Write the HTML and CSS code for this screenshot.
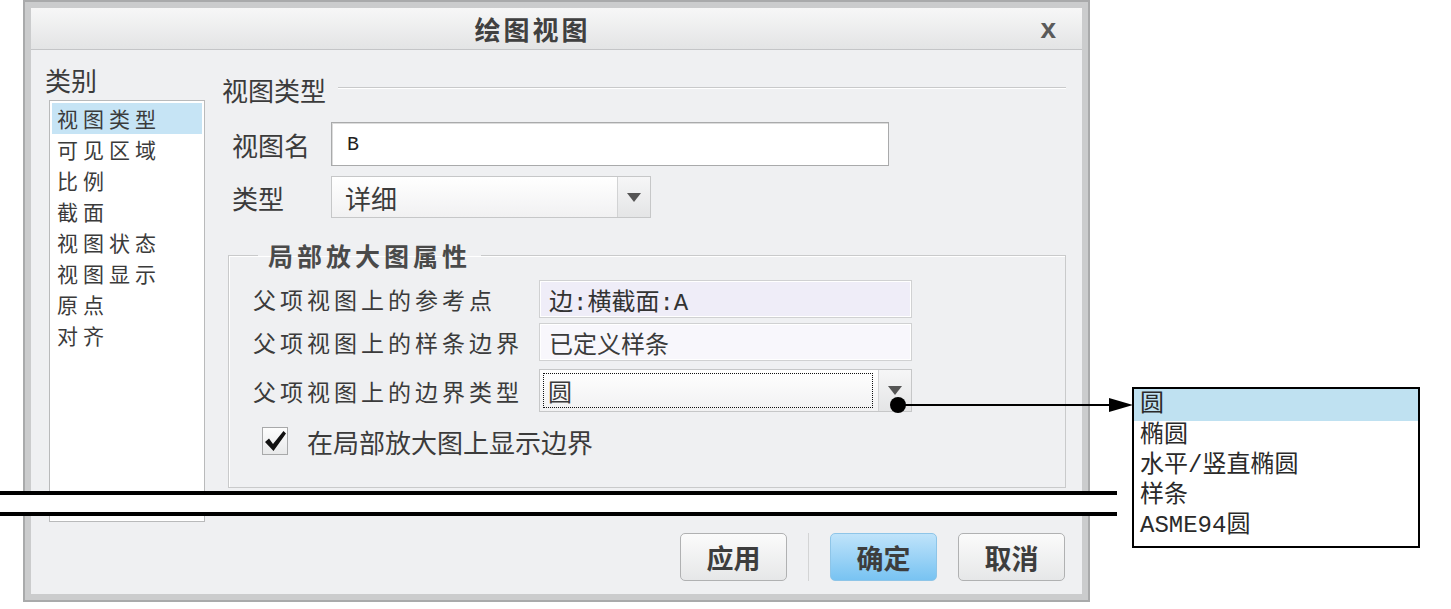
FILE: index.html
```html
<!DOCTYPE html>
<html lang="zh-CN">

<head>
    <meta charset="UTF-8">
    <meta name="viewport" content="width=device-width, initial-scale=1.0">
    <title>绘图视图</title>
    <link rel="stylesheet" href="styles.css">
</head>

<body>
    <div class="page">
        <div class="dialog">
            <div class="titlebar">
                <span class="title">绘图视图</span>
                <span class="close">x</span>
            </div>
            <div class="main">
                <!-- 左侧类别 -->
                <div class="category">
                    <div class="cat-label">类别</div>
                    <ul class="cat-list">
                        <li class="active">视图类型</li>
                        <li>可见区域</li>
                        <li>比例</li>
                        <li>截面</li>
                        <li>视图状态</li>
                        <li>视图显示</li>
                        <li>原点</li>
                        <li>对齐</li>
                    </ul>
                </div>
                <!-- 右侧面板 -->
                <div class="panel">
                    <div class="section-head"><span>视图类型</span><i class="rule"></i></div>
                    <div class="form-row row-name">
                        <span class="form-label">视图名</span>
                        <div class="input">B</div>
                    </div>
                    <div class="form-row row-type">
                        <span class="form-label">类型</span>
                        <div class="combo combo-type">
                            <span class="combo-text">详细</span>
                            <span class="combo-btn"><i class="tri"></i></span>
                        </div>
                    </div>
                    <fieldset class="group">
                        <legend>局部放大图属性</legend>
                        <div class="group-row">
                            <span class="group-label">父项视图上的参考点</span>
                            <div class="field field-ref">边:横截面:A</div>
                        </div>
                        <div class="group-row row-spline">
                            <span class="group-label">父项视图上的样条边界</span>
                            <div class="field field-spline">已定义样条</div>
                        </div>
                        <div class="group-row row-edge">
                            <span class="group-label">父项视图上的边界类型</span>
                            <div class="combo combo-edge">
                                <span class="combo-text"><span class="focus">圆</span></span>
                                <span class="combo-btn"><i class="tri"></i></span>
                            </div>
                        </div>
                        <div class="check-row">
                            <span class="checkbox">
                                <svg width="24" height="24" viewBox="0 0 24 24">
                                    <path d="M2 13 L6 9.5 L10 15 L20.5 2 L23 4.5 L10.5 22 Z" fill="#111" />
                                </svg>
                            </span>
                            <span>在局部放大图上显示边界</span>
                        </div>
                    </fieldset>
                </div>
            </div>
            <div class="footer">
                <button class="btn">应用</button>
                <i class="divider"></i>
                <button class="btn btn-primary">确定</button>
                <button class="btn">取消</button>
            </div>
        </div>

        <!-- 断开线 -->
        <div class="break"></div>

        <!-- 指示箭头 -->
        <svg class="pointer" width="250" height="24" viewBox="0 0 250 24">
            <circle cx="10" cy="12" r="8" fill="#000" />
            <line x1="10" y1="12" x2="226" y2="12" stroke="#000" stroke-width="2" />
            <polygon points="221,5 245,12 221,19" fill="#000" />
        </svg>

        <!-- 下拉列表 -->
        <ul class="popup">
            <li class="current">圆</li>
            <li>椭圆</li>
            <li>水平/竖直椭圆</li>
            <li>样条</li>
            <li>ASME94圆</li>
        </ul>
    </div>
</body>

</html>
```

FILE: styles.css
```css
html,
body,
ul {
    padding: 0;
    margin: 0;
}

ul {
    list-style: none;
}

body {
    background: #fff;
    font-family: "Noto Sans CJK SC", sans-serif;
    color: #3b3b3b;
}

.page {
    position: relative;
    width: 1451px;
    height: 609px;
    overflow: hidden;
}

.dialog {
    margin: 2px 0 0 25px;
    width: 1063px;
    height: 598px;
    box-sizing: border-box;
    border: 6px solid #cbcccd;
    box-shadow: 0 0 0 2px #a9aaab;
    background: #eff0f2;
    display: flex;
    flex-direction: column;
}

.titlebar {
    height: 42px;
    box-sizing: border-box;
    border-bottom: 1px solid #c4c5c7;
    background: linear-gradient(#f7f7f7, #e3e4e5);
    display: grid;
    grid-template-columns: 1fr auto 1fr;
    align-items: center;
    padding-right: 22px;
}

.title {
    grid-column: 2;
    margin-right: 26px;
    font-weight: 700;
    font-size: 26px;
    letter-spacing: 3px;
    color: #404040;
}

.close {
    grid-column: 3;
    justify-self: end;
    margin-right: 4px;
    font-family: "Liberation Sans", sans-serif;
    font-weight: 700;
    font-size: 28px;
    line-height: 1;
    color: #5a5a5a;
}

.main {
    display: flex;
    height: 475px;
}

/* 左侧类别 */
.category {
    width: 191px;
    box-sizing: border-box;
    padding: 15px 0 0 14px;
}

.cat-label {
    font-size: 26px;
    line-height: 30px;
}

.cat-list {
    margin: 5px 0 0 4px;
    padding: 2px;
    width: 156px;
    height: 422px;
    box-sizing: border-box;
    background: #fff;
    border: 1px solid #b9babb;
}

.cat-list li {
    height: 31px;
    font-size: 21px;
    line-height: 31px;
    letter-spacing: 5px;
    padding-left: 5px;
}

.cat-list li.active {
    background: #c6e4f5;
}

/* 右侧面板 */
.panel {
    flex: 1;
    padding: 25px 16px 0 0;
}

.section-head {
    display: flex;
    align-items: center;
    gap: 12px;
    font-size: 26px;
    line-height: 30px;
}

.rule {
    flex: 1;
    height: 0;
    margin-top: -4px;
    border-top: 1px solid #c8c9ca;
    border-bottom: 1px solid #fff;
}

.form-row {
    display: flex;
    align-items: center;
    margin-left: 10px;
}

.row-name {
    margin-top: 17px;
}

.row-type {
    margin-top: 10px;
}

.form-label {
    width: 99px;
    font-size: 26px;
}

.input {
    width: 558px;
    height: 44px;
    box-sizing: border-box;
    border: 1px solid #a9aaab;
    box-shadow: inset 1px 1px 0 #dcdcdc;
    background: #fff;
    display: flex;
    align-items: center;
    padding-left: 15px;
    font-family: "Liberation Mono", monospace;
    font-size: 20px;
    color: #222;
}

.combo {
    display: flex;
    box-sizing: border-box;
    border: 1px solid #c6c7c8;
    background: #fff;
}

.combo-type {
    width: 320px;
    height: 42px;
}

.combo-text {
    flex: 1;
    display: flex;
    align-items: center;
    padding-left: 13px;
    font-size: 26px;
    background: linear-gradient(#fff, #f1f1f2);
}

.combo-btn {
    width: 32px;
    border-left: 1px solid #d2d3d4;
    background: linear-gradient(#f6f6f7, #e4e5e6);
    display: flex;
    align-items: center;
    justify-content: center;
}

.tri {
    border-left: 7px solid transparent;
    border-right: 7px solid transparent;
    border-top: 9px solid #555;
}

/* 局部放大图属性 */
.group {
    margin: 22px 0 0 6px;
    padding: 10px 0 30px 24px;
    border: 1px solid #c9cacb;
    box-shadow: inset 1px 1px 0 #fff;
    min-width: 0;
}

.group legend {
    margin-left: 5px;
    padding: 0 10px;
    font-weight: 700;
    font-size: 25px;
    line-height: 30px;
    letter-spacing: 4px;
    color: #4a4a4a;
}

.group-row {
    display: flex;
    align-items: center;
}

.row-spline {
    margin-top: 5px;
}

.row-edge {
    margin-top: 8px;
}

.group-label {
    width: 286px;
    font-size: 23px;
    letter-spacing: 4px;
}

.field {
    width: 373px;
    height: 38px;
    box-sizing: border-box;
    border: 1px solid #d0d1d2;
    box-shadow: inset 0 0 0 1px #fff;
    display: flex;
    align-items: center;
    padding-left: 9px;
    font-size: 24px;
}

.field-ref {
    background: #efedf8;
    font-family: "Liberation Mono", "Noto Sans CJK SC", monospace;
    color: #333;
}

.field-spline {
    background: #f8f7fc;
}

.combo-edge {
    width: 373px;
    height: 43px;
}

.combo-edge .combo-text {
    padding: 3px 5px 3px 3px;
}

.focus {
    flex: 1;
    align-self: stretch;
    display: flex;
    align-items: center;
    padding-left: 4px;
    border: 1px dotted #111;
    font-size: 24px;
}

.check-row {
    display: flex;
    align-items: center;
    gap: 19px;
    height: 32px;
    margin: 13px 0 0 9px;
    font-size: 26px;
}

.checkbox {
    width: 26px;
    height: 28px;
    box-sizing: border-box;
    border: 1px solid #a8a9aa;
    background: linear-gradient(#fdfdfd, #e8e9ea);
    display: flex;
    align-items: center;
    justify-content: center;
}

/* 底部按钮 */
.footer {
    flex: 1;
    display: flex;
    justify-content: flex-end;
    align-items: flex-start;
    padding: 8px 17px 0 0;
}

.btn {
    width: 107px;
    height: 48px;
    padding: 0;
    border: 1px solid #b0b1b2;
    border-radius: 5px;
    background: linear-gradient(#fbfbfb, #e6e7e8);
    font-family: inherit;
    font-weight: 700;
    font-size: 27px;
    color: #3d3d3d;
}

.btn + .btn {
    margin-left: 21px;
}

.btn-primary {
    border-color: #8ec5e8;
    background: linear-gradient(#bfe3fa, #78c3f2);
}

.divider {
    width: 1px;
    height: 48px;
    margin: 0 21px;
    background: #d3d4d5;
}

/* 标注 */
.break {
    position: absolute;
    left: 0;
    top: 491px;
    width: 1117px;
    height: 25px;
    box-sizing: border-box;
    border-top: 4px solid #000;
    border-bottom: 4px solid #000;
    background: #fff;
}

.pointer {
    position: absolute;
    left: 888px;
    top: 393px;
}

.popup {
    position: absolute;
    left: 1132px;
    top: 387px;
    width: 288px;
    height: 161px;
    box-sizing: border-box;
    border: 2px solid #000;
    background: #fff;
    font-family: "Liberation Mono", "Noto Sans CJK SC", monospace;
    font-size: 24px;
    color: #2a2a2a;
}

.popup li {
    height: 30px;
    line-height: 30px;
    padding-left: 6px;
}

.popup li.current {
    height: 32px;
    line-height: 32px;
    background: #bfe1f1;
}
```
